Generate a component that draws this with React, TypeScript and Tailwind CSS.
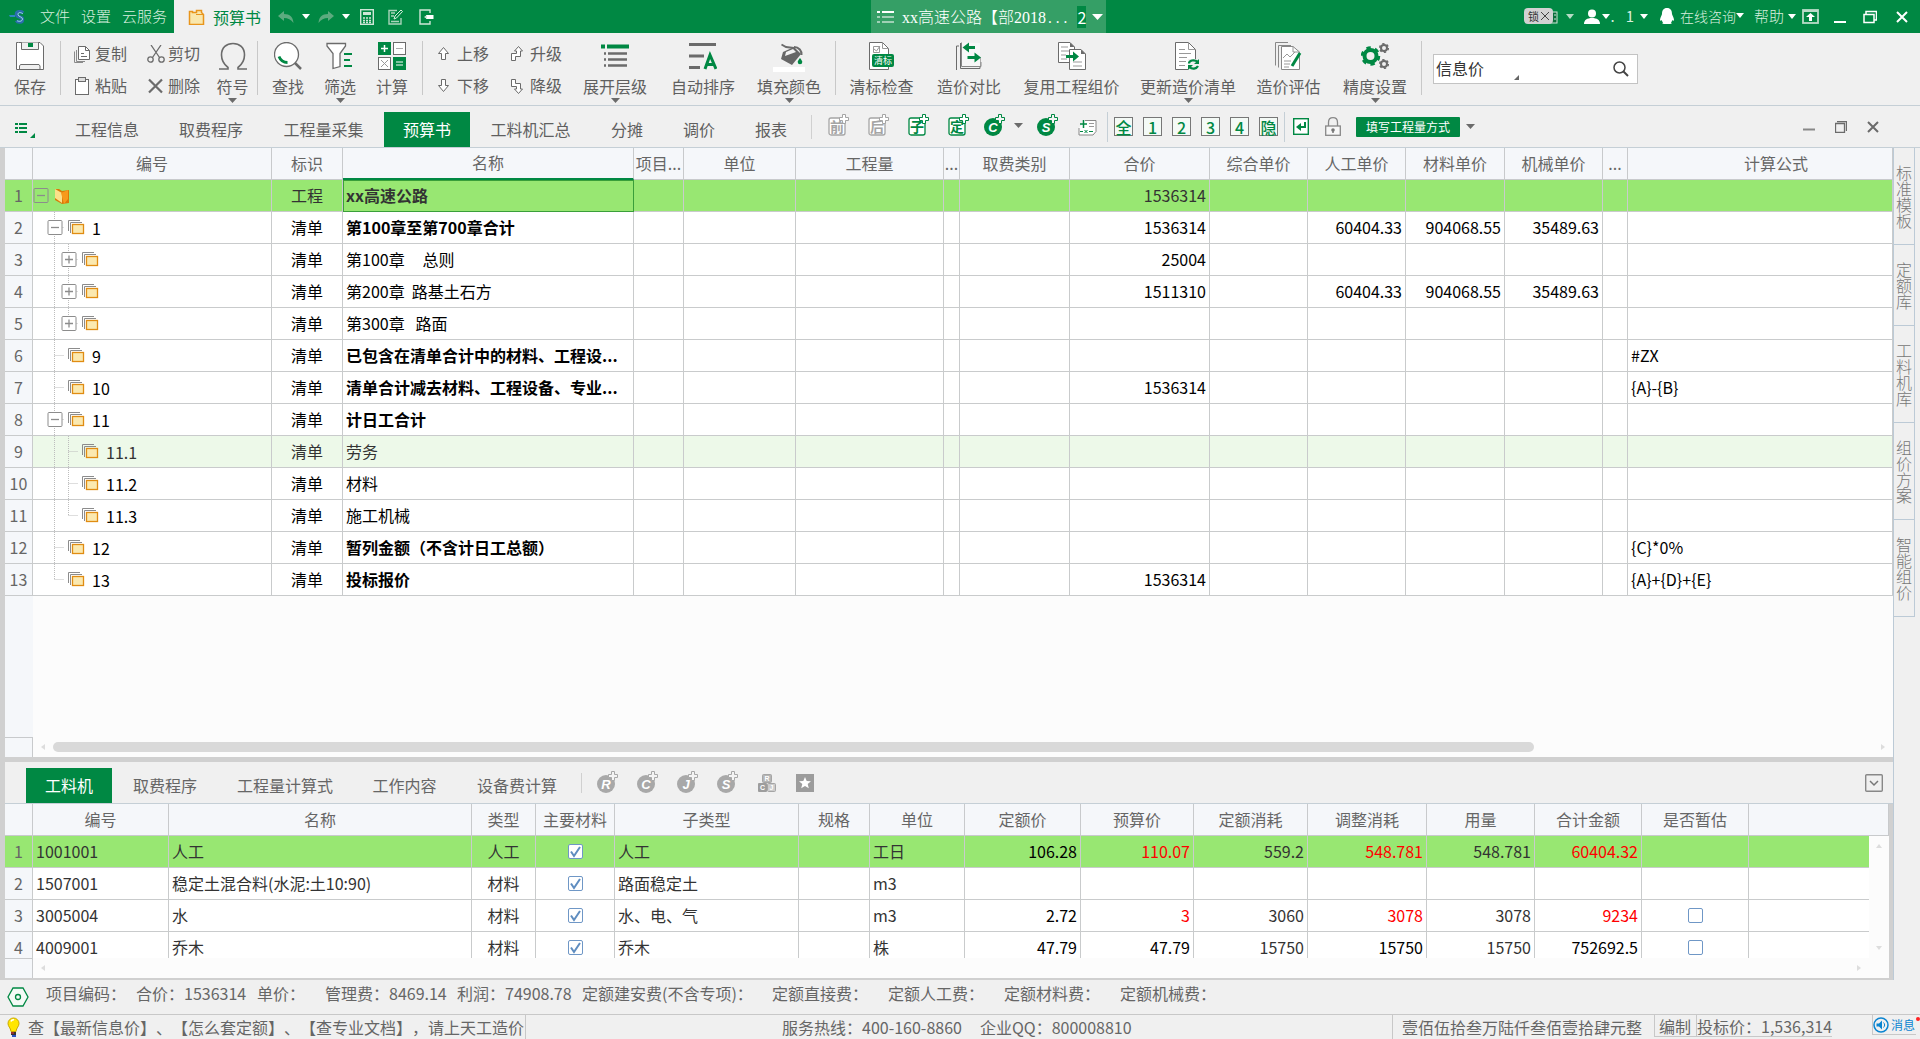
import React, { useState } from 'react';

const GRAY = '#6b6b6b';
const GREEN = '#008843';

type SvgProps = { w: number; h: number; children: React.ReactNode; className?: string };
function Svg({ w, h, children, className }: SvgProps) {
  return (
    <svg width={w} height={h} viewBox={`0 0 ${w} ${h}`} fill="none" className={className ?? 'block shrink-0'} aria-hidden="true">
      {children}
    </svg>
  );
}

function Caret({ color = GRAY, w = 9, h = 5 }: { color?: string; w?: number; h?: number }) {
  return (
    <Svg w={w} h={h}>
      <path d={`M0 0H${w}L${w / 2} ${h}Z`} fill={color} />
    </Svg>
  );
}

/* ---------- ribbon icons ---------- */

const SaveIcon = (
  <Svg w={28} h={28}>
    <path d="M2.500 .5H24l3.500 3.500V27.500H.5V.5Z" fill="#fff" stroke={GRAY} />
    <path d="M5.500 .5V7.500H22.500V.5" fill="#f0f0f0" stroke={GRAY} />
    <rect x="12" y="1" width="5" height="4" fill={GREEN} />
    <path d="M3.500 27.500V24l1-1.500H23l1 1.500V27.500Z" fill="#f0f0f0" stroke={GRAY} />
  </Svg>
);
const CopyIcon = (
  <Svg w={17} h={18}>
    <path d="M2.500 5v11.500H11M.5 6.500v11H9" stroke="#8a8a8a" />
    <path d="M4.500 1.500H11.500L15.500 5.500V14.500H4.500Z" fill="#fff" stroke={GRAY} />
    <path d="M11.500 1.500v4h4M7 8.500h3M7 11.500h6" stroke={GRAY} />
  </Svg>
);
const PasteIcon = (
  <Svg w={17} h={18}>
    <rect x="1.500" y="2.500" width="13" height="15" fill="#fff" stroke={GRAY} />
    <rect x="4.500" y=".5" width="7" height="4" fill="#ddd" stroke={GRAY} />
  </Svg>
);
const CutIcon = (
  <Svg w={18} h={18}>
    <path d="M4 0 12.500 12.500M14 0 5.500 12.500" stroke={GRAY} strokeWidth="1.300" />
    <circle cx="3.500" cy="14.500" r="2.700" stroke={GRAY} strokeWidth="1.300" />
    <circle cx="14.500" cy="14.500" r="2.700" stroke={GRAY} strokeWidth="1.300" />
  </Svg>
);
const DeleteIcon = (
  <Svg w={18} h={18}>
    <path d="M2 2.500 15 15.500M15 2.500 2 15.500" stroke={GRAY} strokeWidth="2.200" />
  </Svg>
);
const OmegaIcon = (
  <Svg w={28} h={28}>
    <path d="M0 27h9v-1.500C4.500 22 2.500 18 2.500 13 2.500 5.500 7.500 1.500 14 1.500S25.500 5.500 25.500 13c0 5-2 9-6.500 12.500V27h9" stroke={GRAY} strokeWidth="1.600" />
  </Svg>
);
const FindIcon = (
  <Svg w={28} h={28}>
    <circle cx="12.500" cy="12.500" r="12" fill="#fff" stroke={GRAY} strokeWidth="1.300" />
    <path d="M5 14.500c1.500 4 4.500 6 8.500 6" stroke={GREEN} strokeWidth="2.800" />
    <path d="M21 21l6 6" stroke={GRAY} strokeWidth="2.500" />
  </Svg>
);
const FilterIcon = (
  <Svg w={28} h={28}>
    <path d="M1 1.500V4l6 7.500v15l7-2V11.500L19.500 4V1.500Z" fill="#fff" stroke={GRAY} strokeWidth="1.300" />
    <path d="M18 12h8M18 18h6M18 24h8" stroke={GREEN} strokeWidth="2" />
  </Svg>
);
const CalcIcon = (
  <Svg w={28} h={28}>
    <rect width="13" height="13" fill={GREEN} />
    <path d="M3 6.500h7M6.500 3v7" stroke="#fff" strokeWidth="1.500" />
    <rect x="15.500" y=".5" width="12" height="12" fill="#fff" stroke={GRAY} />
    <path d="M18 6.500h7" stroke="#aaa" />
    <rect x=".5" y="15.500" width="12" height="12" fill="#fff" stroke={GRAY} />
    <path d="M3 18l7 7M10 18l-7 7" stroke="#999" />
    <rect x="15" y="15" width="13" height="13" fill={GREEN} />
    <path d="M18 20h7M18 23h7" stroke="#fff" />
  </Svg>
);
const UpIcon = (
  <Svg w={14} h={16}>
    <path d="M6.500 1.500 11.500 7.500H8.500V13.500H4.500V7.500H1.500Z" fill="#fff" stroke={GRAY} />
  </Svg>
);
const DownIcon = (
  <Svg w={14} h={16}>
    <path d="M6.500 13.500 11.500 7.500H8.500V1.500H4.500V7.500H1.500Z" fill="#fff" stroke={GRAY} />
  </Svg>
);
const PromoteIcon = (
  <Svg w={14} h={16}>
    <path d="M8.500 .5 12.500 5H10.500V10.500H5.500V14.500H1.500V7.500H6.500V5H4.500Z" fill="#fff" stroke={GRAY} />
  </Svg>
);
const DemoteIcon = (
  <Svg w={14} h={16}>
    <path d="M8.500 15.500 12.500 11H10.500V5.500H5.500V1.500H1.500V8.500H6.500V11H4.500Z" fill="#fff" stroke={GRAY} />
  </Svg>
);
const ExpandIcon = (
  <Svg w={28} h={28}>
    <path d="M0 4.500h4M6 4.500h22" stroke={GREEN} strokeWidth="4" />
    <path d="M3 11.500h2M7 11.500h19M3 17.500h2M7 17.500h19M3 23.500h2M7 23.500h19" stroke={GRAY} strokeWidth="2.500" />
  </Svg>
);
const SortIcon = (
  <Svg w={28} h={28}>
    <path d="M0 2.500h27M0 14h15M0 25.500h11" stroke={GRAY} strokeWidth="3" />
    <path d="M16 27 21 13l6 14M18 22.500h7" stroke={GREEN} strokeWidth="3" />
  </Svg>
);
const FillIcon = (
  <Svg w={32} h={30}>
    <path d="M10 10 21 5l7 7-9 11-11-6Z" fill="#666" />
    <path d="M13 10l7-3 3 3-11 4z" fill="#f0f0f0" />
    <path d="M8.500 2.500 13 5l8 1M21 5c5 0 8 4 7.500 8" stroke={GRAY} strokeWidth="2" />
    <path d="M27 16c1.500 2 2.300 3 2.300 4a2.300 2.300 0 0 1-4.600 0c0-1 .8-2 2.300-4z" fill={GREEN} />
    <rect y="25" width="32" height="5" fill="#fff" />
  </Svg>
);
const CheckDocIcon = (
  <Svg w={28} h={28}>
    <path d="M1.500 .5H14.500L20.500 6.500V27.500H1.500Z" fill="#fff" stroke={GRAY} />
    <path d="M14.500 .5v6h6M5.500 4.500h6v6h-6zM6 7l2.500 2L12 4" stroke="#999" />
    <rect x="4" y="12" width="22" height="13" rx="2" fill={GREEN} />
    <text x="15" y="22" fontSize="9" fill="#fff" textAnchor="middle">清标</text>
  </Svg>
);
const CompareIcon = (
  <Svg w={28} h={28}>
    <path d="M5.500 1v25.500H25V15M4 4H1.500V28.500H23" stroke={GRAY} />
    <path d="M6.500 .5V24.500H25V1Z" fill="#f7f7f7" />
    <path d="M6.500 .5V24.500H26V20" stroke="#888" />
    <path d="M7.500 5.500 14 .5V4h6v3h-6v3.500ZM26 15.500 19.500 10.500V14h-7v3h7v3.500Z" fill={GREEN} />
  </Svg>
);
const ReuseIcon = (
  <Svg w={28} h={28}>
    <path d="M.5 .5H12L16.500 5V20.500H.5Z" fill="#fff" stroke={GRAY} />
    <path d="M3 5h7M3 9h9M3 13h5M3 17h6" stroke="#999" />
    <path d="M11.500 7.500H23L27.500 12V27.500H11.500Z" fill="#fff" stroke={GRAY} />
    <path d="M23 7.500V12h4.500ZM12 .5V5h4.500Z" fill={GRAY} />
    <path d="M15 20h9M15 24h9" stroke="#999" />
    <path d="M8 13h7V9.500l6 5-6 5V16H8Z" fill={GREEN} />
  </Svg>
);
const UpdateIcon = (
  <Svg w={28} h={28}>
    <path d="M1.500 .5H14.500L21.500 7.500V27.500H1.500Z" fill="#fff" stroke={GRAY} />
    <path d="M14.500 .5v7h7M5 7.500h6M5 11.500h12M5 15.500h8M5 19.500h7M5 23.500h6" stroke="#999" />
    <path d="M14 17h14v11H14z" fill="#f0f0f0" />
    <path d="M15 21.500c0-3 5-4.500 9-1.500M24 24c-1.500 3-6 3.500-8.500 1" stroke={GREEN} strokeWidth="2.200" />
    <path d="M25 17v5h-5ZM14 28v-5h5Z" fill={GREEN} />
  </Svg>
);
const AssessIcon = (
  <Svg w={28} h={28}>
    <path d="M.5 23.500V.5H13M3.500 25.500V3.500H16" stroke="#888" />
    <path d="M6.500 4.500H18L24.500 10V27.500H6.500Z" fill="#fff" stroke="#888" />
    <path d="M18 4.500V10h6.500M8 16l4-4 3 3 5-5M9 19h7M9 22h6M9 25h5" stroke="#999" />
    <path d="M25 11 17 24" stroke={GREEN} strokeWidth="3" />
  </Svg>
);
const GearIcon = (
  <Svg w={28} h={28}>
    <circle cx="9.500" cy="14" r="6" stroke={GREEN} strokeWidth="4" />
    <circle cx="9.500" cy="14" r="8.500" stroke={GREEN} strokeWidth="2.500" strokeDasharray="4.450 4.450" />
    <circle cx="23" cy="6" r="3" stroke={GRAY} strokeWidth="2" />
    <circle cx="23" cy="6" r="4.300" stroke={GRAY} strokeWidth="1.500" strokeDasharray="2.250 2.250" />
    <circle cx="23" cy="22" r="3" stroke={GRAY} strokeWidth="2" />
    <circle cx="23" cy="22" r="4.300" stroke={GRAY} strokeWidth="1.500" strokeDasharray="2.250 2.250" />
  </Svg>
);

function BigButton({ icon, label, width, menu }: { icon: React.ReactNode; label: string; width: string; menu?: boolean }) {
  return (
    <button type="button" className={`flex shrink-0 flex-col items-center ${width}`}>
      <span className="flex h-7 items-start justify-center">{icon}</span>
      <span className="mt-1.5 block h-[22px] leading-5 whitespace-nowrap">{label}</span>
      {menu && <Caret />}
    </button>
  );
}
function SmallButton({ icon, label, gap }: { icon: React.ReactNode; label: string; gap: string }) {
  return (
    <button type="button" className={`flex h-8 items-center whitespace-nowrap ${gap}`}>
      {icon}
      <span className="pb-0.5">{label}</span>
    </button>
  );
}
const Sep = () => <span className="mt-2 h-[54px] w-px shrink-0 bg-[#c8c8c8]" />;

/* ---------- title bar ---------- */

function TitleBar() {
  return (
    <header className="flex h-[33px] shrink-0 items-stretch justify-between bg-[#008843] text-[15px] text-[#d8efdf]">
      <div className="flex w-[871px] items-center">
        <Svg w={17} h={14} className="ml-[9px] block shrink-0">
          <path d="M0 5h6v2H1z" fill="#2f86c4" />
          <path d="M14 3C12 1 7 1 7.500 4.500s6 1.500 6 5-5 3-6 1" stroke="#2b6cae" strokeWidth="3.500" />
          <path d="M14 4C12 2 9 2 9 4.500s4.500 2 4.500 4.500-4 3-5.500 1.500" stroke="#9fe0e4" strokeWidth="1" />
        </Svg>
        <nav className="ml-[14px] flex gap-[11px] font-light">
          <button type="button">文件</button>
          <button type="button">设置</button>
          <button type="button">云服务</button>
        </nav>
        <button type="button" className="ml-[7px] flex h-full w-24 items-center gap-2 bg-[#f0f0f0] pl-3.5 text-base text-[#008843]">
          <Svg w={17} h={16}>
            <path d="M1.500 2.500v13h14v-10l-2-2v-2h-5v2h-4v-1z" fill="#f9e7ad" stroke="#e8951c" strokeWidth="1.500" />
            <path d="M8 5.500h7" stroke="#e8951c" />
          </Svg>
          预算书
        </button>
        <div className="ml-2 flex items-center gap-2">
          <button type="button" aria-label="撤销">
            <Svg w={16} h={14}><path d="M0 6 6 1v3c6 0 9 3 9.500 9C13 9.500 10 8 6 8v3Z" fill="#5cab7f" /></Svg>
          </button>
          <Caret color="#fff" w={8} />
          <button type="button" aria-label="重做">
            <Svg w={16} h={14}><path d="M16 6 10 1v3C4 4 1 7 .5 13 3 9.500 6 8 10 8v3Z" fill="#5cab7f" /></Svg>
          </button>
          <Caret color="#fff" w={8} />
          <button type="button" aria-label="计算器" className="ml-0.5">
            <Svg w={14} h={16}>
              <rect x=".7" y=".7" width="12.600" height="14.600" stroke="#cfe6d7" strokeWidth="1.400" />
              <rect x="3" y="3" width="8" height="3" fill="#cfe6d7" />
              <path d="M3 9h2M6 9h2M9 9h2M3 11.500h2M6 11.500h2M9 11.500h2M3 13.500h2M6 13.500h2M9 13.500h2" stroke="#cfe6d7" strokeWidth="1.500" />
            </Svg>
          </button>
          <button type="button" aria-label="编辑" className="ml-1.5">
            <Svg w={15} h={16}>
              <path d="M9 1.500H1v13.500h12V9M3 4h4M3 7h3M3 12.500h8" stroke="#a9d4ba" strokeWidth="1.400" />
              <path d="M6 10l1-3 6-6 1.500 1.500-6 6.500z" stroke="#d8efdf" />
            </Svg>
          </button>
          <button type="button" aria-label="退出" className="ml-2">
            <Svg w={15} h={16}>
              <path d="M11 4V1H1v14h10v-3" stroke="#cfe6d7" strokeWidth="1.400" />
              <path d="M7 6h7.500v4H7z" fill="#fff" />
              <path d="M5 8l3-2v4Z" fill="#cfe6d7" />
            </Svg>
          </button>
        </div>
      </div>
      <button type="button" className="flex w-[235px] shrink-0 items-center bg-[#359f66] pl-1.5 text-base text-white">
        <Svg w={17} h={14}>
          <path d="M0 2h3M5 2h12" stroke="#fff" strokeWidth="2" />
          <path d="M0 7h3M5 7h12M0 12h3M5 12h12" stroke="#9fd0b5" strokeWidth="2" />
        </Svg>
        <span className="ml-2 flex items-baseline font-light whitespace-nowrap">
          <span className="font-[Liberation_Serif,serif]">xx</span>高速公路【部
          <span className="font-[Liberation_Serif,serif]">2018</span>
          <span className="font-[Liberation_Mono,monospace] text-[13px]">...</span>
        </span>
        <span className="ml-2 bg-[#008843] leading-[22px]">2</span>
        <span className="ml-1.5"><Caret color="#fff" w={11} h={6} /></span>
      </button>
      <div className="flex w-[814px] items-center justify-end pr-3 text-[#d8efdf]">
        <Svg w={36} h={17}>
          <rect x="25" y="4" width="8" height="11" fill="#0a6e3a" stroke="#cfe6d7" />
          <path d="M30 7h2M30 11h2" stroke="#cfe6d7" />
          <rect width="29" height="16" rx="4" fill="#d2d2d2" />
          <text x="4" y="12.500" fontSize="11" fill="#333">锁</text>
          <path d="M17 4l8 8M25 4l-8 8" stroke="#444" />
        </Svg>
        <span className="ml-1.5"><Caret color="#b5dcc5" w={8} /></span>
        <Svg w={16} h={16} className="ml-2.5 block shrink-0">
          <circle cx="8" cy="4.500" r="4" fill="#fff" />
          <path d="M0 15c0-4 3-6 8-6s8 2 8 6z" fill="#fff" />
        </Svg>
        <span className="ml-0.5"><Caret color="#fff" w={8} /></span>
        <span>.</span>
        <span className="ml-[11px]">1</span>
        <span className="ml-1.5"><Caret color="#fff" w={8} /></span>
        <Svg w={14} h={17} className="ml-3 block shrink-0">
          <path d="M7 0c3.500 0 5 2.500 5 6 0 1 2 3.500 2 6 0 1-.8 1-1.500 0-.3 1-.8 1.800-1.500 2.500 1 .5 1 1.500-1 1.500H4c-2 0-2-1-1-1.500C2.300 13.800 1.800 13 1.500 12 .8 13 0 13 0 12c0-2.500 2-5 2-6 0-3.500 1.500-6 5-6z" fill="#fff" />
        </Svg>
        <button type="button" className="ml-1.5 flex items-center pb-0.5 text-sm font-light">在线咨询<Caret color="#fff" w={8} /></button>
        <button type="button" className="ml-2.5 flex items-center gap-1 font-light">帮助<Caret color="#fff" w={8} /></button>
        <button type="button" aria-label="收起" className="ml-1.5">
          <Svg w={17} h={15}>
            <rect x="1" y="1" width="15" height="13" stroke="#b9dcc8" strokeWidth="1.800" />
            <path d="M1 2h15" stroke="#b9dcc8" strokeWidth="2" />
            <path d="M8.500 4 13 8h-3v4H7V8H4z" fill="#fff" />
          </Svg>
        </button>
        <button type="button" aria-label="最小化" className="ml-[15px]">
          <Svg w={12} h={14}><path d="M0 12h12" stroke="#fff" strokeWidth="2" /></Svg>
        </button>
        <button type="button" aria-label="还原" className="ml-[17px]">
          <Svg w={14} h={14}><path d="M1 4.500h10v8H1zM3 4V1.500h10.500V10H11" stroke="#fff" strokeWidth="1.500" /></Svg>
        </button>
        <button type="button" aria-label="关闭" className="ml-[19px]">
          <Svg w={12} h={12}><path d="M1 1l10 10M11 1 1 11" stroke="#fff" strokeWidth="2" /></Svg>
        </button>
      </div>
    </header>
  );
}

function Ribbon() {
  return (
    <div className="flex h-[73px] shrink-0 items-start border-b border-[#c5cfd6] pr-4 whitespace-nowrap">
      <div className="flex pt-[9px]"><BigButton icon={SaveIcon} label="保存" width="w-[60px]" /></div>
      <Sep />
      <div className="grid grid-cols-[73px_61px] pt-[5px] pl-[13px]">
        <SmallButton icon={CopyIcon} label="复制" gap="gap-1" />
        <SmallButton icon={CutIcon} label="剪切" gap="gap-[3px]" />
        <SmallButton icon={PasteIcon} label="粘贴" gap="gap-1" />
        <SmallButton icon={DeleteIcon} label="删除" gap="gap-[3px]" />
      </div>
      <div className="flex pt-[9px]"><BigButton icon={OmegaIcon} label="符号" width="w-[49px]" menu /></div>
      <Sep />
      <div className="flex px-1 pt-[9px]">
        <BigButton icon={FindIcon} label="查找" width="w-[52px]" />
        <BigButton icon={FilterIcon} label="筛选" width="w-[52px]" menu />
        <BigButton icon={CalcIcon} label="计算" width="w-[52px]" />
      </div>
      <Sep />
      <div className="grid grid-cols-[73px_61px] pt-[5px] pl-[14px]">
        <SmallButton icon={UpIcon} label="上移" gap="gap-1.5" />
        <SmallButton icon={PromoteIcon} label="升级" gap="gap-1.5" />
        <SmallButton icon={DownIcon} label="下移" gap="gap-1.5" />
        <SmallButton icon={DemoteIcon} label="降级" gap="gap-1.5" />
      </div>
      <div className="flex pt-[9px] pr-1">
        <BigButton icon={ExpandIcon} label="展开层级" width="w-[88px]" menu />
        <BigButton icon={SortIcon} label="自动排序" width="w-[88px]" />
        <BigButton icon={FillIcon} label="填充颜色" width="w-[84px]" menu />
      </div>
      <Sep />
      <div className="flex px-0.5 pt-[9px]">
        <BigButton icon={CheckDocIcon} label="清标检查" width="w-[87px]" />
        <BigButton icon={CompareIcon} label="造价对比" width="w-[88px]" />
        <BigButton icon={ReuseIcon} label="复用工程组价" width="w-[117px]" />
        <BigButton icon={UpdateIcon} label="更新造价清单" width="w-[116px]" menu />
        <BigButton icon={AssessIcon} label="造价评估" width="w-[85px]" />
        <BigButton icon={GearIcon} label="精度设置" width="w-[88px]" menu />
      </div>
      <Sep />
      <form className="mt-[21px] ml-[11px] flex h-[30px] w-[205px] items-center border border-[#c3c3c3] bg-white" onSubmit={(e) => e.preventDefault()}>
        <input aria-label="搜索" defaultValue="信息价" className="h-full w-20 pb-0.5 pl-0.5 text-[#333] outline-none" />
        <Svg w={5} h={5} className="mt-4 block shrink-0"><path d="M5 0v5H0z" fill="#666" /></Svg>
        <button type="submit" aria-label="查询" className="mr-2 ml-auto">
          <Svg w={16} h={16}>
            <circle cx="6.500" cy="6.500" r="5.500" stroke="#444" strokeWidth="1.500" />
            <path d="M10.500 10.500 15 15" stroke="#444" strokeWidth="2" />
          </Svg>
        </button>
      </form>
    </div>
  );
}

/* ---------- navigation tabs ---------- */

const PLUS = 'M14.500 .5h3v3h3v3h-3v3h-3v-3h-3v-3h3z';

function BoxPlus({ ch, color }: { ch: string; color: string }) {
  return (
    <button type="button" className="w-10">
      <Svg w={21} h={23}>
        <rect x="1" y="4" width="16" height="17" rx="2" fill="#fff" stroke={color} strokeWidth="1.300" />
        <path d={PLUS} fill="#fff" stroke={color} />
        <text x="9" y="18" fontSize="14" fontWeight="700" fill={color} textAnchor="middle">{ch}</text>
      </Svg>
    </button>
  );
}
function BallPlus({ ch, color }: { ch: string; color: string }) {
  return (
    <Svg w={21} h={23}>
      <circle cx="9" cy="13" r="9" fill={color} />
      <path d={PLUS} fill="#f4f4f4" stroke={color} />
      <text x="9" y="18" fontSize="13" fontWeight="700" fontStyle="italic" fill="#fff" textAnchor="middle" fontFamily="Liberation Sans">{ch}</text>
    </Svg>
  );
}
function BoxChar({ ch }: { ch: string }) {
  return (
    <button type="button" className="mr-[10px] flex h-[19px] w-[19px] items-center justify-center border border-[#777] bg-[#f4faf6] text-base leading-none font-medium text-[#008843]">
      {ch}
    </button>
  );
}

const MAIN_TABS: [string, string][] = [
  ['工程信息', 'w-[104px]'],
  ['取费程序', 'w-[104px]'],
  ['工程量采集', 'w-[121px]'],
  ['预算书', 'w-[86px]'],
  ['工料机汇总', 'w-[121px]'],
  ['分摊', 'w-[72px]'],
  ['调价', 'w-[72px]'],
  ['报表', 'w-[72px]'],
];

function NavTabs() {
  const [active, setActive] = useState('预算书');
  return (
    <div className="flex h-[42px] shrink-0 items-center border-b border-[#c5cfd6]">
      <button type="button" aria-label="目录" className="ml-[15px] w-10">
        <Svg w={21} h={16} className="mt-1.5 block">
          <path d="M0 2h3M4 2h8M0 6h3M4 6h8M0 10h3M4 10h8" stroke={GREEN} strokeWidth="2" />
          <path d="M20 11v5h-5z" fill={GREEN} />
        </Svg>
      </button>
      <nav className="flex h-full items-end">
        {MAIN_TABS.map(([t, w]) => (
          <button
            key={t}
            type="button"
            onClick={() => setActive(t)}
            className={`h-[35px] pb-0.5 ${w} ${active === t ? 'bg-[#008843] text-white' : ''}`}
          >
            {t}
          </button>
        ))}
      </nav>
      <span className="ml-1 h-6 w-px bg-[#d0d0d0]" />
      <div className="ml-4 flex items-center pb-0.5">
        <BoxPlus ch="前" color="#a5a5a5" />
        <BoxPlus ch="后" color="#a5a5a5" />
        <BoxPlus ch="子" color={GREEN} />
        <BoxPlus ch="定" color={GREEN} />
        <button type="button" aria-label="插入材料" className="-ml-1"><BallPlus ch="C" color={GREEN} /></button>
        <span className="ml-[9px]"><Caret /></span>
        <button type="button" aria-label="插入设备" className="ml-3.5 w-10"><BallPlus ch="S" color={GREEN} /></button>
        <button type="button" aria-label="公式" className="mt-1">
          <Svg w={22} h={18}>
            <path d="M8 1.500h11v11l-3 3.500H2V9" fill="#fff" stroke="#888" />
            <path d="M3 5h7M6.500 1v8" stroke={GREEN} strokeWidth="1.500" />
            <path d="M12 4.500h5M12 7.500h5" stroke="#999" />
            <path d="M3 12.500h3M7.500 11l3 3M10.500 11l-3 3M12 12.500h4" stroke={GREEN} />
          </Svg>
        </button>
      </div>
      <span className="ml-2 h-[30px] w-px bg-[#c5cfd6]" />
      <div className="ml-1.5 flex">
        {['全', '1', '2', '3', '4', '隐'].map((c) => <BoxChar key={c} ch={c} />)}
      </div>
      <span className="-ml-1 h-[30px] w-px bg-[#c5cfd6]" />
      <button type="button" aria-label="换行" className="ml-2">
        <Svg w={16} h={17}>
          <rect x=".7" y=".7" width="14.600" height="15.600" fill="#fff" stroke={GREEN} strokeWidth="1.400" />
          <path d="M12 4v5H6" stroke={GREEN} strokeWidth="2" />
          <path d="M3 9l5-4v8z" fill={GREEN} />
        </Svg>
      </button>
      <button type="button" aria-label="锁定" className="ml-4">
        <Svg w={16} h={19}>
          <path d="M3.500 9V5.500C3.500 2.500 5 .7 8 .7s4.500 1.800 4.500 4.800V9" stroke="#888" strokeWidth="1.300" />
          <rect x=".7" y="9" width="14.600" height="9.300" fill="#f7f7f7" stroke="#888" strokeWidth="1.300" />
          <circle cx="8" cy="13" r="1.800" fill="#777" />
          <path d="M8 13v3" stroke="#777" strokeWidth="1.500" />
        </Svg>
      </button>
      <button type="button" className="ml-[15px] h-5 w-[104px] rounded-[1px] bg-[#008843] text-xs leading-5 text-white">填写工程量方式</button>
      <span className="ml-1.5"><Caret /></span>
      <div className="mr-[41px] ml-auto flex items-center gap-5">
        <button type="button" aria-label="最小化子窗口"><Svg w={12} h={14}><path d="M0 9.500h12" stroke="#888" strokeWidth="2" /></Svg></button>
        <button type="button" aria-label="还原子窗口"><Svg w={12} h={12}><path d="M.5 2.500h9v9h-9zM2 .7h9.500V10" stroke={GRAY} strokeWidth="1.300" /></Svg></button>
        <button type="button" aria-label="关闭子窗口"><Svg w={12} h={12}><path d="M1 1l10 10M11 1 1 11" stroke={GRAY} strokeWidth="2" /></Svg></button>
      </div>
    </div>
  );
}

/* ---------- main grid ---------- */

type Row = {
  level: number;
  box?: '+' | '-';
  code: string;
  kind: string;
  name: string;
  bold?: boolean;
  total?: string;
  labor?: string;
  material?: string;
  machine?: string;
  formula?: string;
  last?: boolean;
};

const ROWS: Row[] = [
  { level: 0, box: '-', code: '', kind: '工程', name: 'xx高速公路', bold: true, total: '1536314' },
  { level: 1, box: '-', code: '1', kind: '清单', name: '第100章至第700章合计', bold: true, total: '1536314', labor: '60404.33', material: '904068.55', machine: '35489.63' },
  { level: 2, box: '+', code: '', kind: '清单', name: '第100章     总则', total: '25004' },
  { level: 2, box: '+', code: '', kind: '清单', name: '第200章  路基土石方', total: '1511310', labor: '60404.33', material: '904068.55', machine: '35489.63' },
  { level: 2, box: '+', code: '', kind: '清单', name: '第300章   路面', last: true },
  { level: 1, code: '9', kind: '清单', name: '已包含在清单合计中的材料、工程设...', bold: true, formula: '#ZX' },
  { level: 1, code: '10', kind: '清单', name: '清单合计减去材料、工程设备、专业...', bold: true, total: '1536314', formula: '{A}-{B}' },
  { level: 1, box: '-', code: '11', kind: '清单', name: '计日工合计', bold: true },
  { level: 2, code: '11.1', kind: '清单', name: '劳务' },
  { level: 2, code: '11.2', kind: '清单', name: '材料' },
  { level: 2, code: '11.3', kind: '清单', name: '施工机械', last: true },
  { level: 1, code: '12', kind: '清单', name: '暂列金额（不含计日工总额）', bold: true, formula: '{C}*0%' },
  { level: 1, code: '13', kind: '清单', name: '投标报价', bold: true, total: '1536314', formula: '{A}+{D}+{E}', last: true },
];

function TreeMark({ row }: { row: Row }) {
  const x = row.level * 14;
  const dots = { stroke: '#bdbdbd', strokeDasharray: '1 1' };
  return (
    <Svg w={x + 38} h={31}>
      {row.level === 2 && <path d="M21.500 0V31" {...dots} />}
      {row.level > 0 && <path d={`M${x + 7.5} 0V${row.last ? 16 : 31}M${x + 7.5} 15.500H${x + 17}`} {...dots} />}
      {row.box && (
        <>
          <rect x={x + 1} y="8.500" width="14" height="14" rx="1" fill={row.level ? '#fff' : '#98e772'} stroke="#8c8c8c" />
          <path d={`M${x + 4} 15.500h8${row.box === '+' ? `M${x + 8} 11.500v8` : ''}`} stroke="#8c8c8c" strokeWidth="1.300" />
        </>
      )}
      {row.level === 0 ? (
        <>
          <path d="M22 9h4l3 2 7-1v13l-7 1-7-4z" fill="#d97a08" />
          <path d="M22 9l7 4v10l-7-5z" fill="#fbe08a" />
          <path d="M28 13l7-3v9l-4 5z" fill="#f79a1c" />
        </>
      ) : (
        <>
          <path d={`M${x + 21.5} 19V8.500H${x + 33}M${x + 23.5} 21V10.500H${x + 35}`} stroke="#8c8c8c" />
          <rect x={x + 25.5} y="12.500" width="11" height="9" fill="#fbe9b0" stroke="#e08c12" strokeWidth="1.300" />
        </>
      )}
    </Svg>
  );
}

const HEADS = ['', '编号', '标识', '名称', '项目...', '单位', '工程量', '...', '取费类别', '合价', '综合单价', '人工单价', '材料单价', '机械单价', '...', '计算公式'];
const WIDTHS = [28, 239, 71, 291, 50, 112, 148, 16, 110, 140, 98, 98, 99, 98, 25];

const TH = 'h-8 overflow-hidden border-r border-b border-[#c8cacc] bg-[#f5f7fa] p-0 pb-0.5 text-center leading-5 font-normal whitespace-nowrap text-[#666]';
const CELL = 'h-8 overflow-hidden border-r border-b border-[#c9cbcc] leading-5 whitespace-pre';
const TD = `${CELL} p-0 pb-0.5`;

function MainGrid() {
  return (
    <div className="flex min-h-0 flex-1 flex-col overflow-hidden bg-[#fcfcfc]">
      <table className="w-full table-fixed border-separate border-spacing-0">
        <colgroup>
          {WIDTHS.map((w, i) => <col key={i} style={{ width: w }} />)}
          <col />
        </colgroup>
        <thead>
          <tr>
            {HEADS.map((h, i) => (
              <th key={i} scope="col" className={`${TH} ${i === 3 ? 'border-b-2 border-b-[#008843]' : ''} ${i === 15 ? 'pl-8' : ''}`}>{h}</th>
            ))}
          </tr>
        </thead>
        <tbody>
          {ROWS.map((r, i) => {
            const tone = i === 0 ? 'bg-[#98e772] text-[#333]' : i === 8 ? 'bg-[#edf9e9] text-[#333]' : 'bg-white text-black';
            return (
              <tr key={i} className={tone}>
                <td className={`${TD} text-center text-[#666] ${i === 0 ? '' : 'bg-[#f5f7fa]'}`}>{i + 1}</td>
                <td className={`${CELL} p-0`}>
                  <div className="flex items-center gap-[7px]">
                    <TreeMark row={r} />
                    <span>{r.code}</span>
                  </div>
                </td>
                <td className={`${TD} text-center`}>{r.kind}</td>
                <td className={`${TD} pl-[3px] ${r.bold ? 'font-bold' : ''} ${i === 0 ? 'outline outline-1 -outline-offset-1 outline-[#3a9f3a]' : ''}`}>{r.name}</td>
                <td className={TD} />
                <td className={TD} />
                <td className={TD} />
                <td className={TD} />
                <td className={TD} />
                <td className={`${TD} pr-[3px] text-right`}>{r.total}</td>
                <td className={TD} />
                <td className={`${TD} pr-[3px] text-right`}>{r.labor}</td>
                <td className={`${TD} pr-[3px] text-right`}>{r.material}</td>
                <td className={`${TD} pr-[3px] text-right`}>{r.machine}</td>
                <td className={TD} />
                <td className={`${TD} pl-[3px]`}>{r.formula}</td>
              </tr>
            );
          })}
        </tbody>
      </table>
      <div className="min-h-0 w-7 flex-1 bg-[#f5f7fa]" />
      <div className="flex h-5 shrink-0 items-center">
        <div className="h-full w-7 border-t border-r border-[#c8cacc] bg-[#f5f7fa]" />
        <Svg w={4} h={6} className="ml-2 block"><path d="M4 0v6L0 3z" fill="#ddd" /></Svg>
        <div className="ml-2 flex-1"><div className="h-[10px] w-[81%] rounded-full bg-[#d9d9d9]" /></div>
        <Svg w={4} h={6} className="mr-2 block"><path d="M0 0v6l4-3z" fill="#ddd" /></Svg>
      </div>
    </div>
  );
}

/* ---------- resource grid ---------- */

const RES_HEADS = ['', '编号', '名称', '类型', '主要材料', '子类型', '规格', '单位', '定额价', '预算价', '定额消耗', '调整消耗', '用量', '合计金额', '是否暂估', ''];
const RES_WIDTHS = [28, 136, 303, 64, 79, 184, 71, 95, 116, 113, 114, 119, 108, 107, 107];

type Res = { code: string; name: string; type: string; sub: string; unit: string; nums: string[]; red: number[]; est: boolean };
const RES: Res[] = [
  { code: '1001001', name: '人工', type: '人工', sub: '人工', unit: '工日', nums: ['106.28', '110.07', '559.2', '548.781', '548.781', '60404.32'], red: [1, 3, 5], est: false },
  { code: '1507001', name: '稳定土混合料(水泥:土10:90)', type: '材料', sub: '路面稳定土', unit: 'm3', nums: ['', '', '', '', '', ''], red: [], est: false },
  { code: '3005004', name: '水', type: '材料', sub: '水、电、气', unit: 'm3', nums: ['2.72', '3', '3060', '3078', '3078', '9234'], red: [1, 3, 5], est: true },
  { code: '4009001', name: '乔木', type: '材料', sub: '乔木', unit: '株', nums: ['47.79', '47.79', '15750', '15750', '15750', '752692.5'], red: [], est: true },
];

function Tick({ label, checked }: { label: string; checked?: boolean }) {
  return (
    <label className="relative mx-auto block h-[15px] w-[15px]">
      <input type="checkbox" aria-label={label} defaultChecked={checked} className="peer block h-[15px] w-[15px] appearance-none rounded-[2px] border border-[#6f97c6] bg-white" />
      <Svg w={15} h={15} className="pointer-events-none absolute inset-0 hidden peer-checked:block">
        <path d="M3 7.500 6 12 12 3" stroke="#5f8dc0" strokeWidth="2" />
      </Svg>
    </label>
  );
}

const RES_TABS: [string, string][] = [
  ['工料机', 'w-[86px]'],
  ['取费程序', 'w-[106px]'],
  ['工程量计算式', 'w-[134px]'],
  ['工作内容', 'w-[105px]'],
  ['设备费计算', 'w-[120px]'],
];

function ResCols() {
  return (
    <colgroup>
      {RES_WIDTHS.map((w, i) => <col key={i} style={{ width: w }} />)}
      <col />
    </colgroup>
  );
}

function ResourcePanel() {
  const [active, setActive] = useState('工料机');
  return (
    <section className="flex shrink-0 flex-col">
      <div className="flex h-[42px] items-center border-b border-[#c5cfd6]">
        <nav className="ml-[21px] flex h-full items-end text-[#666]">
          {RES_TABS.map(([t, w]) => (
            <button key={t} type="button" onClick={() => setActive(t)} className={`h-[35px] pb-0.5 ${w} ${active === t ? 'bg-[#008843] text-white' : ''}`}>{t}</button>
          ))}
        </nav>
        <span className="ml-1 h-5 w-px bg-[#d0d0d0]" />
        <div className="ml-[15px] flex items-center gap-[19px]">
          {['R', 'C', 'J', 'S'].map((c) => (
            <button key={c} type="button" aria-label={`插入${c}`}><BallPlus ch={c} color="#a8a8a8" /></button>
          ))}
          <button type="button" aria-label="组合">
            <Svg w={20} h={20}>
              <rect x="5.500" y="1.500" width="9" height="8" rx="1" fill="#b5b5b5" stroke="#a5a5a5" />
              <rect x="1" y="10" width="9" height="9" rx="1" fill="#9d9d9d" />
              <rect x="10.500" y="10.500" width="8" height="8" rx="1" fill="#ccc" stroke="#a5a5a5" />
              <text x="10" y="8" fontSize="7" fontWeight="700" fill="#fff" textAnchor="middle" fontFamily="Liberation Sans">R</text>
              <text x="5.500" y="17" fontSize="7" fontWeight="700" fill="#fff" textAnchor="middle" fontFamily="Liberation Sans">C</text>
              <text x="14.500" y="17" fontSize="7" fontWeight="700" fill="#fff" textAnchor="middle" fontFamily="Liberation Sans">J</text>
            </Svg>
          </button>
          <button type="button" aria-label="收藏">
            <Svg w={18} h={18}>
              <rect width="18" height="18" fill="#9c9c9c" />
              <path d="M9 3l1.700 4 4.300.3-3.300 2.700 1.100 4.200L9 12l-3.800 2.200L6.300 10 3 7.300 7.300 7z" fill="#fff" />
            </Svg>
          </button>
        </div>
        <button type="button" aria-label="折叠面板" className="mr-[10px] ml-auto">
          <Svg w={18} h={18}>
            <rect x=".7" y=".7" width="16.600" height="16.600" rx="1" stroke="#888" strokeWidth="1.400" />
            <path d="M5 7l4 4 4-4" stroke="#777" strokeWidth="1.500" />
          </Svg>
        </button>
      </div>
      <div className="border-r-4 border-b-2 border-[#d0d0d0] bg-[#fcfcfc]">
        <table className="w-full table-fixed border-separate border-spacing-0">
          <ResCols />
          <thead>
            <tr>
              {RES_HEADS.map((h, i) => <th key={i} scope="col" className={TH}>{h}</th>)}
            </tr>
          </thead>
        </table>
        <div className="flex h-[122px] overflow-hidden">
          <table className="h-32 flex-1 table-fixed border-separate border-spacing-0">
            <ResCols />
            <tbody>
              {RES.map((r, i) => (
                <tr key={i} className={`text-[#333] ${i === 0 ? 'bg-[#98e772]' : 'bg-white'}`}>
                  <td className={`${TD} text-center text-[#666] ${i === 0 ? '' : 'bg-[#f5f7fa]'}`}>{i + 1}</td>
                  <td className={`${TD} pl-[3px]`}>{r.code}</td>
                  <td className={`${TD} pl-[3px]`}>{r.name}</td>
                  <td className={`${TD} text-center`}>{r.type}</td>
                  <td className={`${CELL} p-0`}><Tick label={`${r.name}主要材料`} checked /></td>
                  <td className={`${TD} pl-[3px]`}>{r.sub}</td>
                  <td className={TD} />
                  <td className={`${TD} pl-[3px]`}>{r.unit}</td>
                  {r.nums.map((n, k) => (
                    <td key={k} className={`${TD} pr-[3px] text-right ${r.red.includes(k) ? 'text-[#f00]' : k === 2 || k === 4 ? '' : 'text-black'}`}>{n}</td>
                  ))}
                  <td className={`${CELL} p-0`}>{r.est && <Tick label={`${r.name}是否暂估`} />}</td>
                  <td className={`${TD} border-r-0`} />
                </tr>
              ))}
            </tbody>
          </table>
          <div className="flex w-5 shrink-0 flex-col items-center justify-between pt-2 pb-2">
            <Svg w={6} h={4}><path d="M0 4h6L3 0z" fill="#ddd" /></Svg>
            <Svg w={6} h={4}><path d="M0 0h6L3 4z" fill="#ddd" /></Svg>
          </div>
        </div>
        <div className="flex h-5 items-center">
          <div className="h-full w-7 border-t border-r border-[#c8cacc] bg-[#f5f7fa]" />
          <Svg w={4} h={6} className="ml-2 block"><path d="M4 0v6L0 3z" fill="#ddd" /></Svg>
          <Svg w={4} h={6} className="mr-7 ml-auto block"><path d="M0 0v6l4-3z" fill="#ddd" /></Svg>
        </div>
      </div>
    </section>
  );
}

function SideTabs() {
  return (
    <aside className="w-[27px] shrink-0 text-[#777]">
      <div className="h-full w-[22px] border-l border-[#bccad6]">
        {['标准模板', '定额库', '工料机库', '组价方案', '智能组价'].map((t) => (
          <button key={t} type="button" className="flex w-full justify-center border-r border-b border-[#bccad6] py-4 font-light">
            <span className="flex flex-col">
              {[...t].map((c, i) => <span key={i} className="leading-4">{c}</span>)}
            </span>
          </button>
        ))}
      </div>
    </aside>
  );
}

/* ---------- status bars ---------- */

const SUMMARY: [string, string][] = [
  ['项目编码：', 'w-[90px]'],
  ['合价：1536314', 'w-[121px]'],
  ['单价：', 'w-[68px]'],
  ['管理费：8469.14', 'w-[132px]'],
  ['利润：74908.78', 'w-[125px]'],
  ['定额建安费(不含专项)：', 'w-[190px]'],
  ['定额直接费：', 'w-[116px]'],
  ['定额人工费：', 'w-[116px]'],
  ['定额材料费：', 'w-[116px]'],
  ['定额机械费：', 'w-[116px]'],
];

function StatusBars() {
  return (
    <footer className="shrink-0 whitespace-nowrap text-[#666]">
      <div className="flex h-[34px] items-center">
        <Svg w={22} h={20} className="ml-[7px] block shrink-0">
          <path d="M6 1h10l5 9-5 9H6l-5-9z" stroke={GREEN} strokeWidth="1.300" fill="#f4faf6" />
          <circle cx="11" cy="10" r="2.500" stroke={GREEN} strokeWidth="1.300" />
        </Svg>
        <div className="-mt-2 ml-[17px] flex">
          {SUMMARY.map(([t, w]) => <span key={t} className={w}>{t}</span>)}
        </div>
      </div>
      <div className="flex h-[25px] items-stretch justify-between border-t border-[#c8c8c8] leading-6">
        <div className="flex w-[526px] items-center border-r border-[#c8c8c8] pl-[7px]">
          <Svg w={13} h={21}>
            <path d="M6.500 1a5.500 5.500 0 0 1 5.500 5.500c0 3-2.500 4-3 8h-5c-.5-4-3-5-3-8A5.500 5.500 0 0 1 6.500 1z" fill="#ffe600" stroke="#c9a800" />
            <path d="M4 4.500C4.500 3 6 2.500 7 3" stroke="#fff" strokeWidth="1.500" />
            <path d="M4 15h5v3H4z" fill="#333" />
            <path d="M5 18h4v2H5z" fill="#2b53c7" />
            <path d="M4 16h3" stroke="#e33" />
          </Svg>
          <span className="ml-2 [text-spacing-trim:space-all]">查【最新信息价】、【怎么套定额】、【查专业文档】，请上天工造价</span>
        </div>
        <div className="ml-64 flex flex-1 gap-[18px]">
          <span>服务热线：400-160-8860</span>
          <span>企业QQ：800008810</span>
        </div>
        <div className="flex">
          <span className="w-[262px] border-l border-[#c8c8c8] pl-[9px]">壹佰伍拾叁万陆仟叁佰壹拾肆元整</span>
          <span className="h-[22px] w-[42px] border-b border-l border-[#c8c8c8] pl-1 leading-[22px]">编制</span>
          <span className="h-[22px] w-[136px] border-b border-l border-[#c8c8c8] leading-[22px]">投标价：1,536,314</span>
        </div>
        <button type="button" className="relative mr-1 ml-10 flex h-5 w-11 items-center gap-0.5 self-start border-b border-l border-[#c8c8c8] text-xs text-[#0a84d0]">
          <Svg w={16} h={16}>
            <circle cx="8" cy="8" r="7" stroke="#0a84d0" strokeWidth="1.500" />
            <path d="M3.500 6.500H6L9 3.500v9L6 9.500H3.500z" fill="#0a84d0" />
            <path d="M10.500 5.500c1.500 1.500 1.500 3.500 0 5" stroke="#0a84d0" />
          </Svg>
          消息
          <span className="absolute top-0.5 -right-1 h-1 w-1 rounded-full bg-[#f22]" />
        </button>
      </div>
    </footer>
  );
}

export default function App() {
  return (
    <div className="flex h-screen min-w-[1700px] flex-col overflow-hidden bg-[#f0f0f0] font-['Noto_Sans_CJK_SC',sans-serif] text-base text-[#5f5f5f]">
      <TitleBar />
      <Ribbon />
      <NavTabs />
      <div className="flex min-h-0 flex-1">
        <div className="flex min-w-0 flex-1 flex-col border-l-[5px] border-[#d0d0d0]">
          <MainGrid />
          <div className="h-[5px] shrink-0 bg-[#d0d0d0]" />
          <ResourcePanel />
        </div>
        <SideTabs />
      </div>
      <StatusBars />
    </div>
  );
}
